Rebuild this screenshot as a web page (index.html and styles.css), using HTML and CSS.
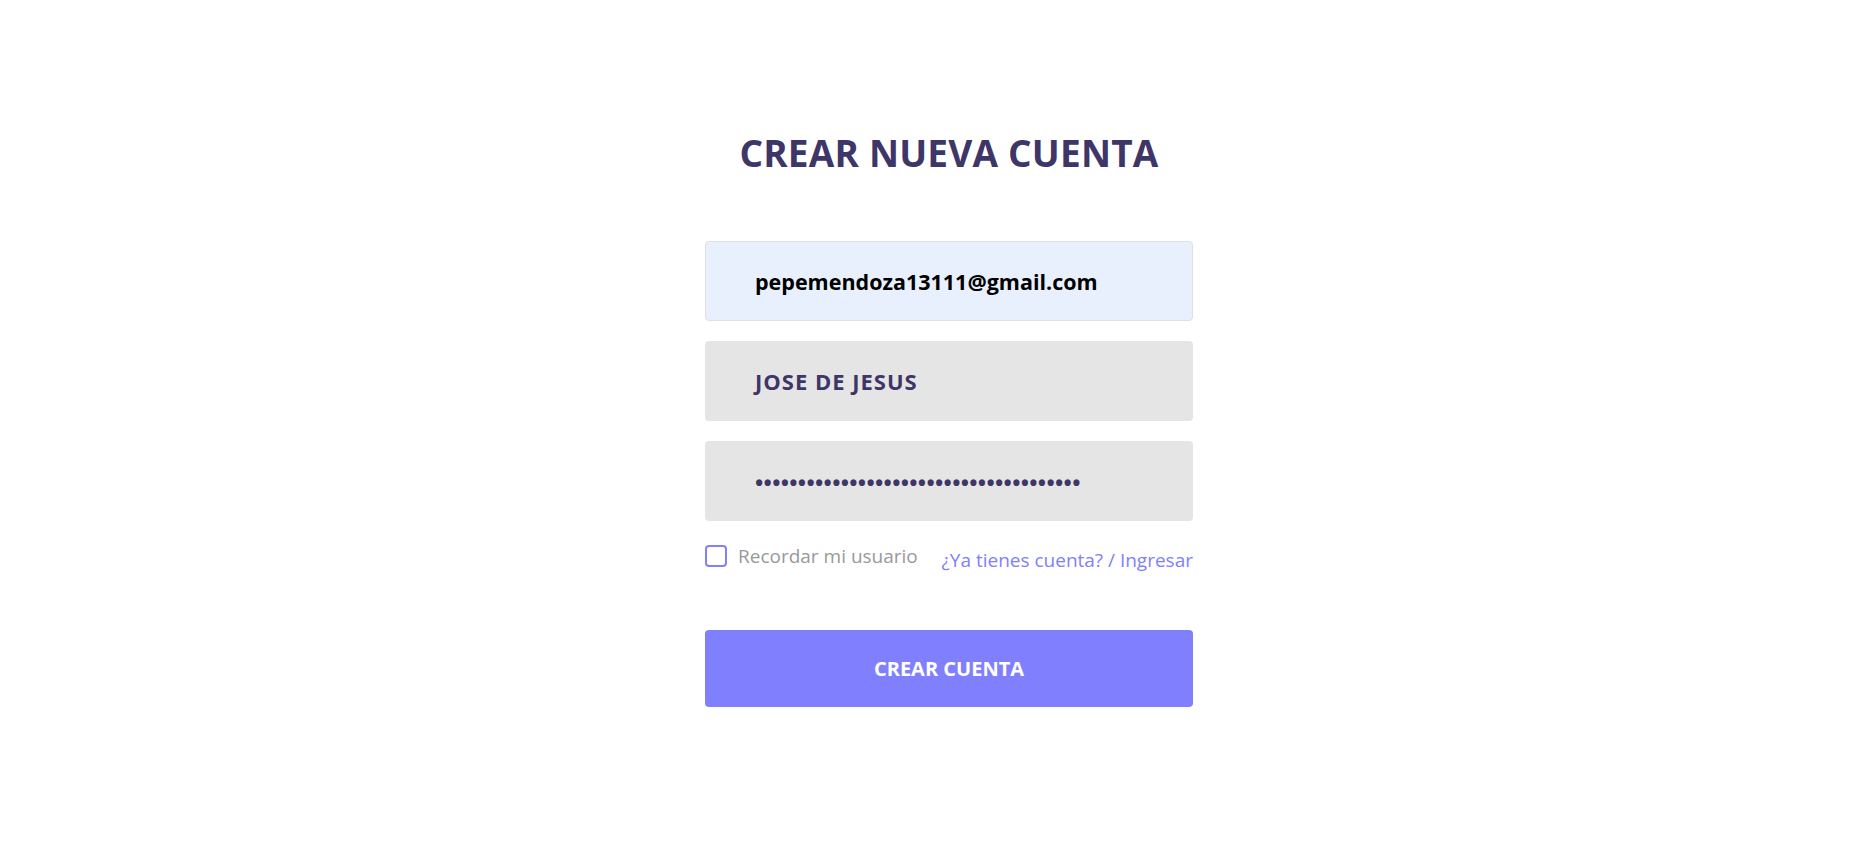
FILE: index.html
```html
<!DOCTYPE html>
<html lang="es">
<head>
<meta charset="utf-8">
<title>Crear nueva cuenta</title>
<link rel="stylesheet" href="styles.css">
</head>
<body>
<main class="page">
  <section class="card">
    <h1 class="title">CREAR NUEVA CUENTA</h1>
    <form class="form">
      <div class="field field-autofill">pepemendoza13111@gmail.com</div>
      <div class="field field-name">JOSE DE JESUS</div>
      <div class="field field-pass">••••••••••••••••••••••••••••••••••••••</div>
      <div class="options">
        <label class="remember"><span class="check"></span><span>Recordar mi usuario</span></label>
        <a class="login-link" href="#">¿Ya tienes cuenta? / Ingresar</a>
      </div>
      <button type="button" class="btn">CREAR CUENTA</button>
    </form>
  </section>
</main>
</body>
</html>
```
FILE: styles.css
```css
html, body {
  margin: 0;
  padding: 0;
  background: #ffffff;
}
body {
  font-family: "Open Sans", "Noto Sans", sans-serif;
}
.page {
  display: flex;
  justify-content: center;
  padding-left: 25px;
  padding-top: 128px;
}
.card {
  width: 488px;
  display: flex;
  flex-direction: column;
  align-items: center;
}
.title {
  margin: 0;
  font-size: 37px;
  line-height: 50px;
  font-weight: 700;
  color: #3f3668;
  letter-spacing: 0.2px;
}
.form {
  width: 100%;
  margin-top: 63px;
  display: flex;
  flex-direction: column;
  gap: 20px;
}
.field {
  box-sizing: border-box;
  height: 80px;
  border-radius: 4px;
  background: #e5e5e5;
  padding-left: 50px;
  display: flex;
  align-items: center;
  font-size: 21.5px;
  font-weight: 700;
  color: #3f3668;
}
.field-autofill {
  background: #e8f0fe;
  border: 1px solid #dcdfe6;
  padding-left: 49px;
  color: #000000;
}
.field-name {
  font-size: 22px;
  letter-spacing: 1px;
}
.field-pass {
  font-size: 22px;
  letter-spacing: 0.3px;
  padding-top: 2px;
}
.options {
  display: flex;
  justify-content: space-between;
  align-items: flex-start;
  margin-top: 2px;
  height: 67px;
}
.remember {
  display: flex;
  align-items: center;
  gap: 11px;
  font-size: 19px;
  line-height: 26px;
  color: #999999;
}
.check {
  box-sizing: border-box;
  width: 22px;
  height: 22px;
  border: 2px solid #7f7fff;
  border-radius: 4px;
}
.login-link {
  margin-top: 4px;
  font-size: 19px;
  line-height: 26px;
  color: #7f7fff;
  text-decoration: none;
}
.btn {
  margin-top: 0;
  height: 77px;
  border: none;
  border-radius: 4px;
  background: #8080ff;
  color: #ffffff;
  font-family: inherit;
  font-size: 20px;
  font-weight: 700;
}
```
